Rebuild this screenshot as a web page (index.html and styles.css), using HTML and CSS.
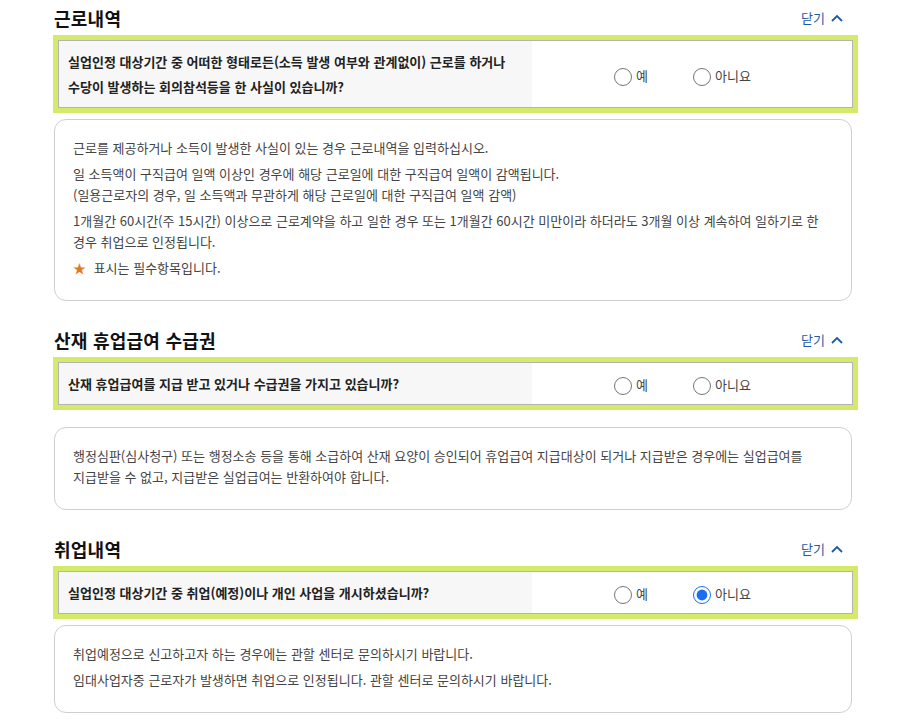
FILE: index.html
```html
<!DOCTYPE html>
<html lang="ko">

<head>
  <meta charset="UTF-8" />
  <meta name="viewport" content="width=device-width, initial-scale=1.0" />
  <title>실업인정 신청</title>
  <link rel="stylesheet" href="styles.css">
</head>

<body>
  <div class="page">

    <section class="sect">
      <div class="sect-head">
        <h2>근로내역</h2>
        <button class="toggle" type="button">닫기
          <svg viewBox="0 0 12 8" width="12" height="8"><path d="M1 7 L6 2 L11 7" /></svg>
        </button>
      </div>
      <div class="question q-near">
        <div class="q-row">
          <div class="q-text">실업인정 대상기간 중 어떠한 형태로든(소득 발생 여부와 관계없이) 근로를 하거나<br>수당이 발생하는 회의참석등을 한 사실이 있습니까?</div>
          <div class="q-opts">
            <label class="opt"><input type="radio" name="work"> 예</label>
            <label class="opt"><input type="radio" name="work"> 아니요</label>
          </div>
        </div>
      </div>
      <div class="info">
        <p>근로를 제공하거나 소득이 발생한 사실이 있는 경우 근로내역을 입력하십시오.</p>
        <p>일 소득액이 구직급여 일액 이상인 경우에 해당 근로일에 대한 구직급여 일액이 감액됩니다.<br>(일용근로자의 경우, 일 소득액과 무관하게 해당 근로일에 대한 구직급여 일액 감액)</p>
        <p>1개월간 60시간(주 15시간) 이상으로 근로계약을 하고 일한 경우 또는 1개월간 60시간 미만이라 하더라도 3개월 이상 계속하여 일하기로 한 경우 취업으로 인정됩니다.</p>
        <p><span class="star">★</span> 표시는 필수항목입니다.</p>
      </div>
    </section>

    <section class="sect">
      <div class="sect-head">
        <h2>산재 휴업급여 수급권</h2>
        <button class="toggle" type="button">닫기
          <svg viewBox="0 0 12 8" width="12" height="8"><path d="M1 7 L6 2 L11 7" /></svg>
        </button>
      </div>
      <div class="question q-far">
        <div class="q-row">
          <div class="q-text">산재 휴업급여를 지급 받고 있거나 수급권을 가지고 있습니까?</div>
          <div class="q-opts">
            <label class="opt"><input type="radio" name="injury"> 예</label>
            <label class="opt"><input type="radio" name="injury"> 아니요</label>
          </div>
        </div>
      </div>
      <div class="info">
        <p>행정심판(심사청구) 또는 행정소송 등을 통해 소급하여 산재 요양이 승인되어 휴업급여 지급대상이 되거나 지급받은 경우에는 실업급여를<br>지급받을 수 없고, 지급받은 실업급여는 반환하여야 합니다.</p>
      </div>
    </section>

    <section class="sect">
      <div class="sect-head">
        <h2>취업내역</h2>
        <button class="toggle" type="button">닫기
          <svg viewBox="0 0 12 8" width="12" height="8"><path d="M1 7 L6 2 L11 7" /></svg>
        </button>
      </div>
      <div class="question q-near">
        <div class="q-row">
          <div class="q-text">실업인정 대상기간 중 취업(예정)이나 개인 사업을 개시하셨습니까?</div>
          <div class="q-opts">
            <label class="opt"><input type="radio" name="job"> 예</label>
            <label class="opt"><input type="radio" name="job" checked> 아니요</label>
          </div>
        </div>
      </div>
      <div class="info">
        <p>취업예정으로 신고하고자 하는 경우에는 관할 센터로 문의하시기 바랍니다.</p>
        <p>임대사업자중 근로자가 발생하면 취업으로 인정됩니다. 관할 센터로 문의하시기 바랍니다.</p>
      </div>
    </section>

  </div>
</body>

</html>
```

FILE: styles.css
```css
* {
  margin: 0;
  padding: 0;
  box-sizing: border-box;
}

body {
  font-family: "Noto Sans CJK KR", "Noto Sans", sans-serif;
  background-color: #fff;
  color: #333;
}

.page {
  width: 852px;
  padding-left: 54px;
}

.sect + .sect {
  margin-top: 21px;
}

.sect-head {
  display: flex;
  justify-content: space-between;
  align-items: center;
  height: 35px;
}

.sect-head h2 {
  font-size: 18px;
  font-weight: 700;
  letter-spacing: 0.25px;
  word-spacing: 0;
  color: #111;
}

.toggle {
  display: flex;
  align-items: center;
  gap: 6px;
  margin-right: 9px;
  border: none;
  background: none;
  font-family: inherit;
  font-size: 13px;
  color: #2159a8;
  cursor: pointer;
}

.toggle svg path {
  fill: none;
  stroke: #2159a8;
  stroke-width: 1.8;
}

.question {
  margin: 0 -6px 0 -1px;
  border: 5px solid #d4ea6b;
}

.q-near {
  margin-bottom: 6px;
}

.q-far {
  margin-bottom: 17px;
}

.q-row {
  display: flex;
  border: 1px solid #b4b4b4;
}

.q-text {
  width: 473px;
  padding: 8px 9px;
  background-color: #f7f7f7;
  font-size: 13px;
  font-weight: 700;
  line-height: 25px;
  color: #222;
}

.q-opts {
  flex: 1;
  display: flex;
  align-items: center;
  padding: 2px 0 0 82px;
  background-color: #fff;
}

.opt {
  display: flex;
  align-items: center;
  gap: 4px;
  width: 79px;
  font-size: 13px;
  color: #444;
  cursor: pointer;
}

.opt input {
  width: 18px;
  height: 18px;
  margin: 3px 0 0;
  accent-color: #1a6ff0;
}

.info {
  border: 1px solid #cfcfcf;
  border-radius: 12px;
  padding: 17px 18px 22px;
}

.info p {
  font-size: 13px;
  line-height: 21px;
  color: #444;
}

.info p + p {
  margin-top: 5px;
}

.star {
  color: #e8781f;
  margin-right: 4px;
}
```
